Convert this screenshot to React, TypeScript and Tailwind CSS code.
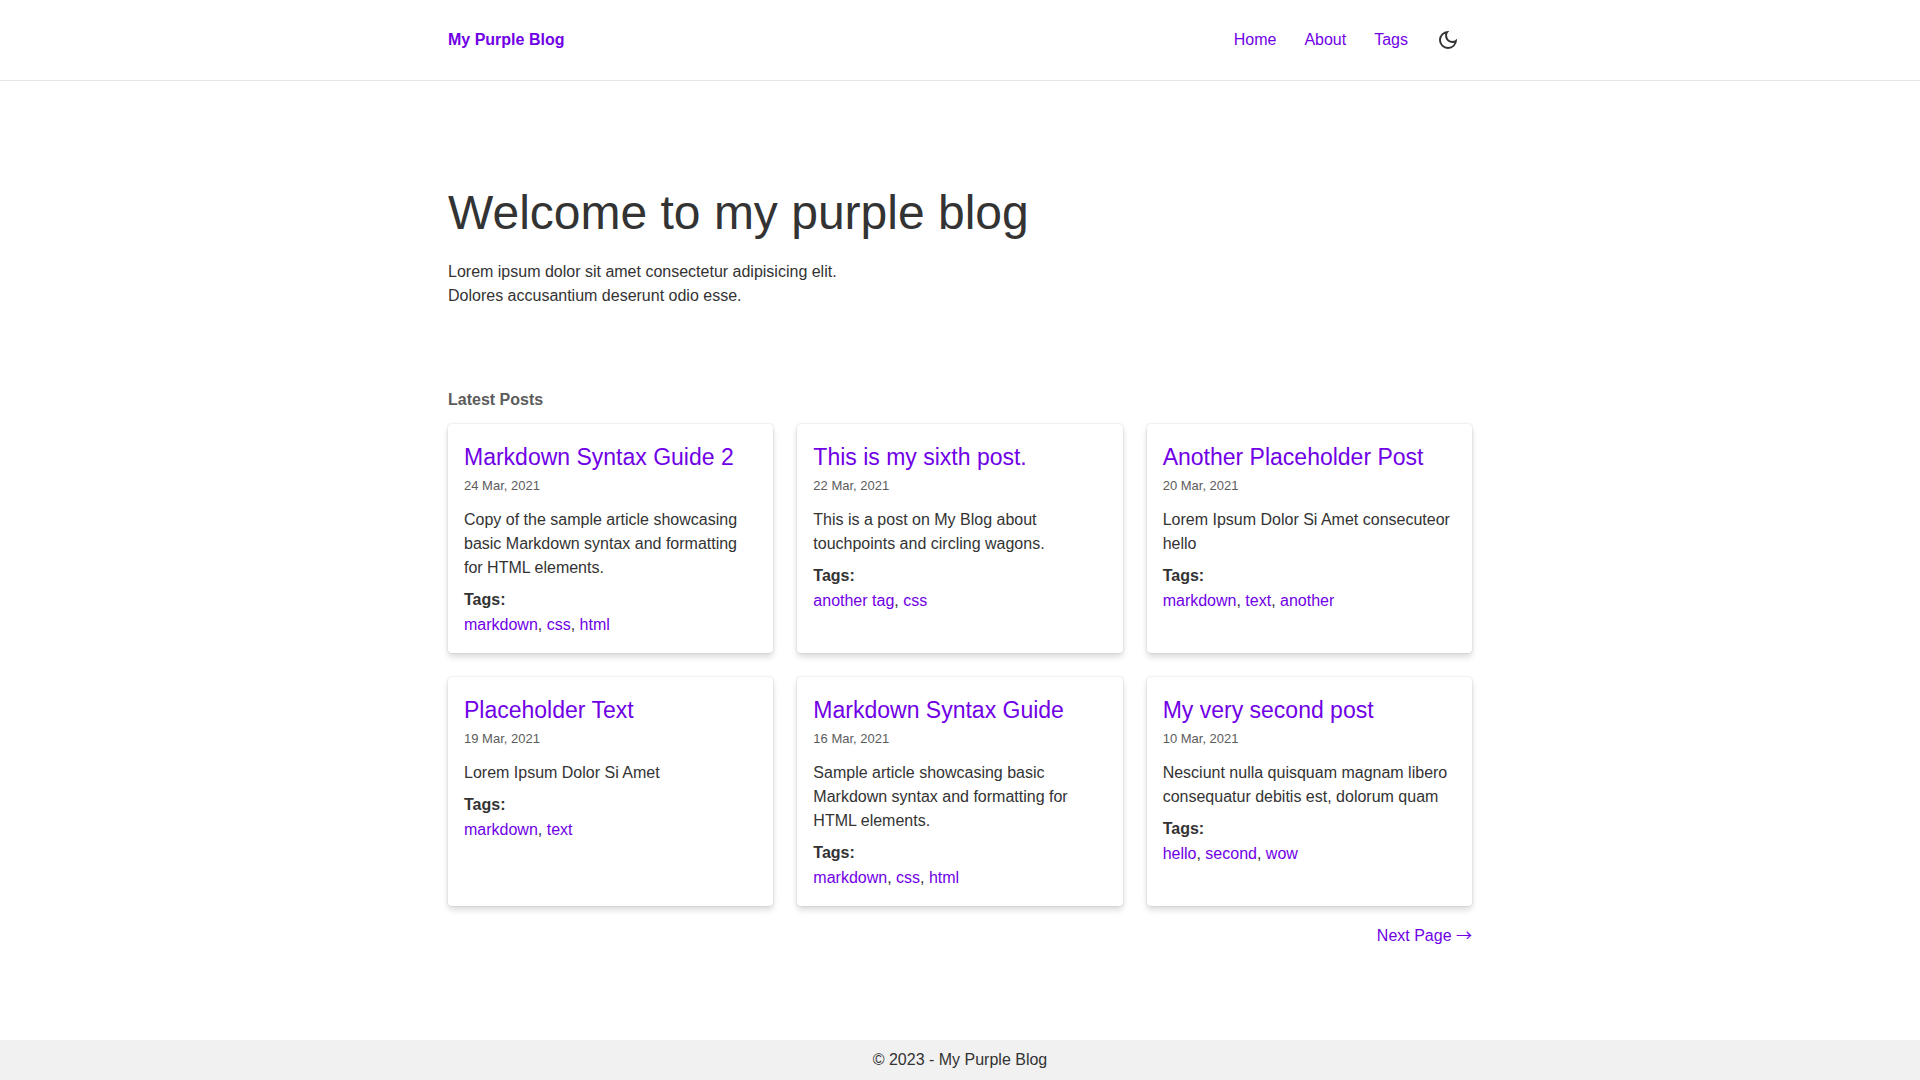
import React from 'react';
import { MdOutlineDarkMode } from 'react-icons/md';

const posts = [
  { title: 'Markdown Syntax Guide 2', date: '24 Mar, 2021', text: 'Copy of the sample article showcasing basic Markdown syntax and formatting for HTML elements.', tags: ['markdown', 'css', 'html'] },
  { title: 'This is my sixth post.', date: '22 Mar, 2021', text: 'This is a post on My Blog about touchpoints and circling wagons.', tags: ['another tag', 'css'] },
  { title: 'Another Placeholder Post', date: '20 Mar, 2021', text: 'Lorem Ipsum Dolor Si Amet consecuteor hello', tags: ['markdown', 'text', 'another'] },
  { title: 'Placeholder Text', date: '19 Mar, 2021', text: 'Lorem Ipsum Dolor Si Amet', tags: ['markdown', 'text'] },
  { title: 'Markdown Syntax Guide', date: '16 Mar, 2021', text: 'Sample article showcasing basic Markdown syntax and formatting for HTML elements.', tags: ['markdown', 'css', 'html'] },
  { title: 'My very second post', date: '10 Mar, 2021', text: 'Nesciunt nulla quisquam magnam libero consequatur debitis est, dolorum quam', tags: ['hello', 'second', 'wow'] },
];

function PostCard({ post }: { post: (typeof posts)[number] }) {
  return (
    <article className="rounded bg-white p-4 shadow-[0_0_2px_rgba(0,0,0,0.18),0_4px_6px_rgba(0,0,0,0.14)]">
      <h3 className="text-[23px] leading-[34px]">
        <a href="#" className="text-[#7000e6]">{post.title}</a>
      </h3>
      <p className="text-[13px] leading-6 text-[#5c5c5c]">{post.date}</p>
      <p className="mt-2.5">{post.text}</p>
      <p className="mt-2 font-bold">Tags:</p>
      <p className="leading-[25px]">
        {post.tags.map((tag, i) => (
          <React.Fragment key={tag}>
            {i > 0 && ', '}
            <a href="#" className="text-[#7000e6]">{tag}</a>
          </React.Fragment>
        ))}
      </p>
    </article>
  );
}

function App() {
  return (
    <div className="flex min-h-screen flex-col bg-white font-['Liberation_Sans',Arial,sans-serif] text-base text-[#333]">
      <header className="border-b border-[#e6e6e6]">
        <div className="mx-auto flex h-20 max-w-5xl items-center justify-between">
          <a href="#" className="font-bold text-[#7000e6]">My Purple Blog</a>
          <nav className="flex items-center gap-7 text-[#7000e6]">
            <a href="#">Home</a>
            <a href="#">About</a>
            <a href="#">Tags</a>
            <button type="button" aria-label="Toggle dark mode" className="mr-3 text-[#333]">
              <MdOutlineDarkMode className="h-6 w-6" />
            </button>
          </nav>
        </div>
      </header>

      <main className="mx-auto w-full max-w-5xl flex-1">
        <section className="pt-24 pb-20">
          <h1 className="text-5xl leading-[71px]">Welcome to my purple blog</h1>
          <p className="mt-3 max-w-[400px]">
            Lorem ipsum dolor sit amet consectetur adipisicing elit. Dolores accusantium deserunt odio esse.
          </p>
        </section>

        <section>
          <h2 className="mb-3 font-bold text-[#5c5c5c]">Latest Posts</h2>
          <div className="grid grid-cols-3 gap-6">
            {posts.map((post) => (
              <PostCard key={post.title} post={post} />
            ))}
          </div>
          <div className="mt-4 text-right">
            <a href="#" className="text-[#7000e6]">
              Next Page <span className="font-['Noto_Sans_CJK_JP',sans-serif]">→</span>
            </a>
          </div>
        </section>
      </main>

      <footer className="bg-[#f1f1f1] py-2 text-center">© 2023 - My Purple Blog</footer>
    </div>
  );
}

export default App;
